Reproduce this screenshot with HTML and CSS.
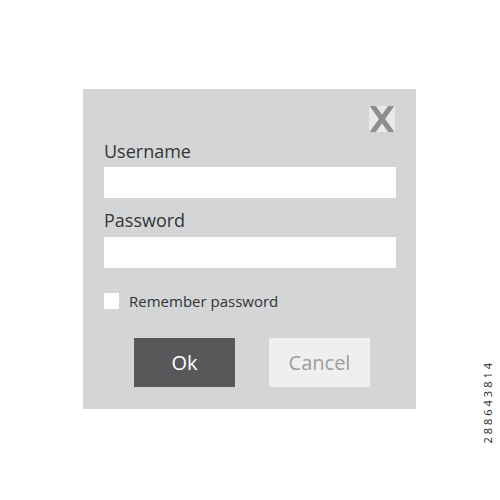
FILE: index.html
```html
<!DOCTYPE html>
<html lang="en">
<head>
    <meta charset="UTF-8">
    <meta name="viewport" content="width=device-width, initial-scale=1.0">
    <title>Login</title>
    <link rel="stylesheet" href="styles.css">
</head>
<body>
    <main class="dialogo">
        <div class="cerrar">
            <svg width="26" height="26" viewBox="0 0 26 26">
                <line x1="3" y1="-1" x2="23" y2="27" stroke="#8e8e8e" stroke-width="5"/>
                <line x1="23" y1="-1" x2="3" y2="27" stroke="#8e8e8e" stroke-width="5"/>
            </svg>
        </div>
        <label class="etiqueta etiqueta-user">Username</label>
        <div class="campo"></div>
        <label class="etiqueta etiqueta-pass">Password</label>
        <div class="campo"></div>
        <div class="recordar">
            <span class="check"></span>
            <span>Remember password</span>
        </div>
        <div class="botones">
            <button class="boton ok">Ok</button>
            <button class="boton cancel">Cancel</button>
        </div>
    </main>
    <div class="idfoto">288643814</div>
</body>
</html>
```

FILE: styles.css
```css
* {
    box-sizing: border-box;
    font-family: 'Open Sans', 'Noto Sans', sans-serif;
}
body {
    margin: 0;
    background-color: white;
    width: 500px;
    height: 500px;
}
.dialogo {
    margin: 89px 0 0 83px;
    width: 333px;
    height: 320px;
    padding: 17px 20px 0 21px;
    background-color: #d4d5d7;
    display: flex;
    flex-direction: column;
}
.cerrar {
    align-self: flex-end;
    margin-right: 1px;
    width: 26px;
    height: 26px;
    background-color: #e9e9ea;
}
.cerrar svg {
    display: block;
}
.etiqueta {
    display: block;
    font-size: 18px;
    line-height: 22px;
    color: #353535;
    margin-bottom: 5px;
}
.etiqueta-user {
    margin-top: 8px;
}
.etiqueta-pass {
    margin-top: 11px;
    margin-bottom: 6px;
}
.campo {
    height: 31px;
    background-color: white;
}
.recordar {
    display: flex;
    align-items: center;
    gap: 10px;
    margin-top: 23px;
    font-size: 15px;
    color: #333;
}
.check {
    width: 15px;
    height: 16px;
    background-color: white;
}
.botones {
    display: flex;
    gap: 34px;
    margin: 27px 0 0 30px;
}
.boton {
    width: 101px;
    height: 49px;
    border: none;
    font-size: 20px;
}
.ok {
    background-color: #58585a;
    color: white;
}
.cancel {
    background-color: #efefef;
    color: #9c9c9c;
}
.idfoto {
    position: absolute;
    left: 480px;
    top: 360px;
    writing-mode: vertical-rl;
    transform: rotate(180deg);
    font-size: 11px;
    letter-spacing: 3px;
    color: #222;
}
```
